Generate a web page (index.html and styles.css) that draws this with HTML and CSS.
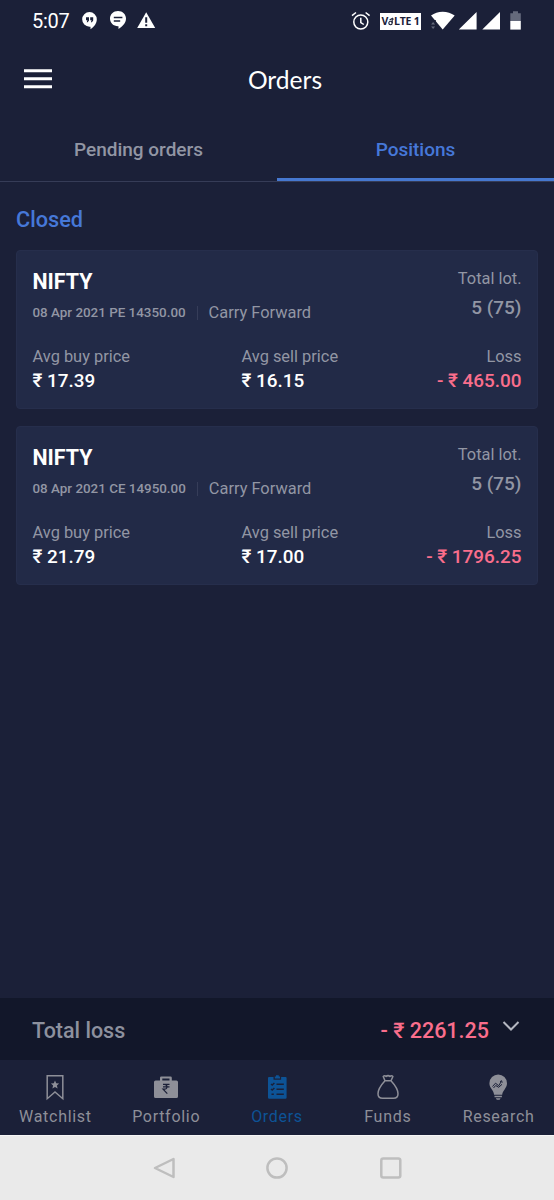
FILE: index.html
```html
<!DOCTYPE html>
<html lang="en">
<head>
<meta charset="utf-8">
<title>Orders</title>
<link rel="stylesheet" href="styles.css">
</head>
<body>
<div class="screen">
  <div class="status">
    <span class="clock">5:07</span>
    <svg class="notices" width="80" height="24" viewBox="80 9 80 24">
      <path fill="#fff" d="M89.500 12a7.300 7.300 0 0 1 7.300 7.300c0 4.200-2.600 7.500-6.300 10v-2.600h-1a7.300 7.300 0 0 1 0-14.700z"/>
      <path fill="#1b2038" d="M86 17.200h3v3.200l-1.300 1.800h-1l.7-1.900H86zM90.200 17.200h3v3.200l-1.300 1.800h-1l.7-1.900h-1.400z"/>
      <path fill="#fff" d="M118 11c4.600 0 8 3.400 8 7.600 0 4.600-3.600 8-7.500 10.500v-2.800H118c-4.600 0-8-3.300-8-7.700 0-4.200 3.400-7.600 8-7.600z"/>
      <path stroke="#1b2038" stroke-width="1.500" d="M113.800 17.500h8.600M113.800 21h6.400"/>
      <path fill="#fff" d="M146.200 12.300 155.200 28h-18z"/>
      <path stroke="#1b2038" stroke-width="2" d="M146.200 17.300v5.500M146.200 24.300v2"/>
    </svg>
    <svg class="alarm" width="20" height="20" viewBox="351 11 20 20" fill="none" stroke="#fff" stroke-width="1.500">
      <circle cx="360.800" cy="22" r="7"/><path d="M360.800 17.800v4.700l3 2M352 15.600l4-3.100M369.600 15.600l-4-3.100"/>
    </svg>
    <span class="volte">V<svg width="6" height="9" viewBox="0 0 6 9" fill="none" stroke="#1b2038" stroke-width="1.100"><circle cx="2.500" cy="6" r="1.700"/><path d="M4.200 6V1.400L1.600 3M4.200 1.400l1.600 1"/></svg>LTE 1</span>
    <svg class="signals" width="92" height="22" viewBox="430 9 92 22">
      <path fill="#fff" d="M442.700 29.600 431 15.500q5-3.800 11.700-3.800t12 3.800z"/>
      <path fill="#1b2038" d="M430 20h5.800v10H430z"/>
      <path fill="#656a7c" d="m433.100 22 2 2.600h-4zM433.100 29l2-2.600h-4z"/>
      <path fill="#fff" d="M476.600 12v17.600h-17.800zM500 12v17.600h-17.700z"/>
      <path fill="#656a7c" d="M510.300 13.200h2.700v-2h5v2h2.800v8h-10.500z"/>
      <path fill="#fff" d="M510.300 21h10.500v8.600h-10.500z"/>
    </svg>
  </div>
  <header class="header">
    <svg class="menu" width="28" height="20" viewBox="0 0 28 20"><path fill="#fff" d="M0 .3h28v3H0zM0 8.300h28v3H0zM0 16.300h28v3H0z"/></svg>
    <h1 class="title">Orders</h1>
  </header>
  <nav class="tabs">
    <a class="tab">Pending orders</a>
    <a class="tab tab-on">Positions</a>
  </nav>
  <main class="content">
    <h2 class="section">Closed</h2>
    <section class="card">
      <div class="top">
        <div>
          <div class="symbol">NIFTY</div>
          <div class="meta"><span class="contract">08 Apr 2021 PE 14350.00</span><span class="carry">Carry Forward</span></div>
        </div>
        <div class="lots"><div class="label">Total lot.</div><div class="qty">5 (75)</div></div>
      </div>
      <div class="prices">
        <div><div class="label">Avg buy price</div><div class="value">₹ 17.39</div></div>
        <div><div class="label">Avg sell price</div><div class="value">₹ 16.15</div></div>
        <div class="result"><div class="label">Loss</div><div class="value loss">- ₹ 465.00</div></div>
      </div>
    </section>
    <section class="card">
      <div class="top">
        <div>
          <div class="symbol">NIFTY</div>
          <div class="meta"><span class="contract">08 Apr 2021 CE 14950.00</span><span class="carry">Carry Forward</span></div>
        </div>
        <div class="lots"><div class="label">Total lot.</div><div class="qty">5 (75)</div></div>
      </div>
      <div class="prices">
        <div><div class="label">Avg buy price</div><div class="value">₹ 21.79</div></div>
        <div><div class="label">Avg sell price</div><div class="value">₹ 17.00</div></div>
        <div class="result"><div class="label">Loss</div><div class="value loss">- ₹ 1796.25</div></div>
      </div>
    </section>
  </main>
  <div class="total">
    <span class="total-label">Total loss</span>
    <span class="total-value loss">- ₹ 2261.25</span>
    <svg class="chevron" width="18" height="12" viewBox="0 0 18 12"><path fill="none" stroke="#b4b7c1" stroke-width="2" d="m1.500 2 7.500 7.500L16.500 2"/></svg>
  </div>
  <nav class="bottom">
    <a class="item">
      <svg width="28" height="28" viewBox="0 0 28 28"><path fill="none" stroke="currentColor" stroke-width="1.500" d="M6.200 2.800h15.600v22.900L14 19l-7.800 6.700z"/><path fill="currentColor" d="m14 7.600 1.200 2.700 2.900.3-2.200 1.900.7 2.900-2.600-1.500-2.600 1.500.7-2.900-2.200-1.900 2.900-.3z"/></svg>
      <span>Watchlist</span>
    </a>
    <a class="item">
      <svg width="28" height="28" viewBox="0 0 28 28"><path fill="currentColor" fill-rule="evenodd" d="M8 7.500V4.800Q8 3.500 9.300 3.500h9.200q1.300 0 1.300 1.300v2.700h4.600Q26 7.500 26 9.100v14.300q0 1.600-1.600 1.600H3.600Q2 25 2 23.400V9.100q0-1.600 1.600-1.600zm2.300-1.900v1.900h7.200V5.600z"/><path fill="none" stroke="#1b2038" stroke-width="1.200" d="M11 11.300h6.500M11 13.800h6.500M11 11.300h1.200q2.800 0 2.800 2.500t-2.800 2.400H11l4.300 4.500"/></svg>
      <span>Portfolio</span>
    </a>
    <a class="item item-on">
      <svg width="28" height="28" viewBox="0 0 28 28"><path fill="currentColor" d="M6 4h4.500v2.700h7.600V4H22.600q1 0 1 1v19.500q0 1.200-1.200 1.200H6.200Q5 25.700 5 24.500V5q0-1 1-1z"/><path fill="currentColor" d="M11.800 3.500h1.200V2.200h2.800v1.300H17v2h-5.200z"/><path fill="none" stroke="#1b2038" stroke-width="1.400" d="M13.500 11.200h7.300M13.500 16.200h7.300M13.500 21.200h7.300M8 11l1.200 1.100 2.200-2.200M8 16l1.200 1.100 2.200-2.200M8.500 21.200h2.300"/></svg>
      <span>Orders</span>
    </a>
    <a class="item">
      <svg width="28" height="28" viewBox="0 0 28 28"><path fill="none" stroke="currentColor" stroke-width="1.500" stroke-linejoin="round" d="M11 7.700 9.200 3.500q1.400-1.500 3 0 1.800-1.700 3.700 0 1.700-1.500 3 0L17 7.700zM11 7.700C7.500 11.500 4 16 4 20.700q0 4.500 4.500 4.500h11q4.500 0 4.500-4.500c0-4.700-3.500-9.200-7-13"/></svg>
      <span>Funds</span>
    </a>
    <a class="item">
      <svg width="28" height="28" viewBox="0 0 28 28"><path fill="currentColor" d="M13.200 1.500a8.800 8.800 0 0 1 8.800 8.800c0 5-4.300 6.900-4.800 11.400H9.100C8.600 17 4.400 15.300 4.400 10.300a8.800 8.800 0 0 1 8.800-8.800zM9.500 22.800h7.400v1.400H9.500zM10.800 25.200h4.800l-1 1.500h-2.800z"/><path fill="none" stroke="#1b2038" stroke-width="1" d="m7.500 13.500 3-3.300 3.200 2.500 2.500-4M8.500 15l2.200-2.500 3 1.800 3.300-3M15 8.700l1.600-1 .6 2"/></svg>
      <span>Research</span>
    </a>
  </nav>
  <div class="system">
    <svg width="26" height="26" viewBox="0 0 26 26"><path d="M22.500 4v18L4 13z"/></svg>
    <svg width="26" height="26" viewBox="0 0 26 26"><circle cx="13" cy="13" r="9.600"/></svg>
    <svg width="26" height="26" viewBox="0 0 26 26"><rect x="4.300" y="3.500" width="19" height="19" rx="2"/></svg>
  </div>
</div>
</body>
</html>
```
FILE: styles.css
```css
* { box-sizing: border-box; }
body { margin: 0; background: #1b2038; font-family: Roboto, "Liberation Sans", sans-serif; color: #fff; }
svg { display: block; flex: none; }
.screen { width: 554px; height: 1200px; display: flex; flex-direction: column; }
.status { height: 42px; display: flex; align-items: flex-start; padding: 9px 0 0 32px; }
.clock { width: 48px; font-size: 20px; line-height: 24px; letter-spacing: -0.3px; }
.alarm { margin: 2px 9px 0 191px; }
.volte { display: flex; align-items: center; justify-content: center; width: 41px; height: 17px; margin: 4px 9px 0 0; background: #fff; color: #1b2038; font: bold 10.500px/17px "Open Sans", sans-serif; letter-spacing: -0.2px; white-space: pre; }
.header { height: 76px; display: grid; grid-template-columns: 1fr auto 1fr; align-items: center; padding: 0 8px 1px 24px; }
.menu { margin-bottom: 1px; }
.title { grid-column: 2; margin: 0; font: 400 24.600px/32px Lato, sans-serif; }
.tabs { height: 64px; display: flex; border-bottom: 1px solid #363c57; }
.tab { flex: 1; height: 63px; text-align: center; font-size: 19px; font-weight: 500; line-height: 63px; color: #9296a4; }
.tab-on { color: #4678d8; border-bottom: 3px solid #4678d0; }
.content { flex: 1; padding: 24px 16px 0; }
.section { margin: 0 0 16px; font-size: 21.700px; line-height: 28px; font-weight: 500; color: #4678d8; }
.card { height: 159px; margin-bottom: 17px; padding: 17px 15.500px 15px; background: #222a47; border: 1px solid #262e4c; border-radius: 4px; }
.top { display: flex; justify-content: space-between; height: 62px; }
.symbol { font-size: 21.400px; font-weight: 700; line-height: 27px; }
.meta { display: flex; align-items: center; margin-top: 7px; color: #9296a4; }
.contract { font-size: 13.400px; font-weight: 500; line-height: 22px; }
.carry { margin-left: 11px; padding-left: 12px; font-size: 16.400px; line-height: 22px; background: linear-gradient(#363d59, #363d59) left 4px / 1px 14px no-repeat; }
.label { font-size: 16.400px; line-height: 20px; color: #9296a4; }
.lots { text-align: right; }
.lots .label { padding-top: 1px; }
.qty { margin-top: 6px; font-size: 19px; font-weight: 500; line-height: 26px; color: #9296a4; }
.prices { display: grid; grid-template-columns: 209px 1fr 1fr; margin-top: 17px; }
.result { text-align: right; }
.value { font-size: 18.900px; font-weight: 500; line-height: 27px; }
.loss { color: #fa6e8c; }
.total { height: 62px; display: flex; align-items: center; padding: 2px 34px 0 32px; background: #12172a; font-size: 21.500px; font-weight: 500; }
.total-label { flex: 1; color: #8d919e; }
.chevron { margin: 0 0 9px 13px; }
.bottom { height: 75px; display: flex; color: #8e8f98; }
.item { flex: 1; display: flex; flex-direction: column; align-items: center; padding-top: 13px; font-size: 16px; line-height: 20px; letter-spacing: .7px; }
.item span { margin-top: 6px; }
.item-on { color: #0d5396; }
.system { height: 65px; display: flex; justify-content: center; gap: 87px; padding-top: 19px; background: #eaeaea; border-top: 1px solid #f6f6f6; }
.system svg { fill: none; stroke: #bebebe; stroke-width: 2.500; stroke-linejoin: round; }
```
